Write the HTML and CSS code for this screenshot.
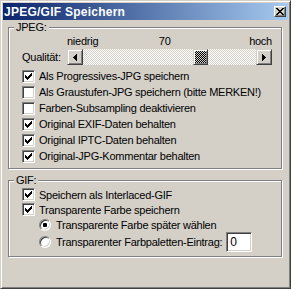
FILE: index.html
```html
<!DOCTYPE html>
<html lang="de">
<head>
    <meta charset="UTF-8">
    <title>JPEG/GIF Speichern</title>
    <link rel="stylesheet" href="styles.css">
</head>
<body>

    <div class="window">
        <div class="titlebar">
            <span class="title">JPEG/GIF Speichern</span>
            <span class="close">
                <svg width="8" height="7" viewBox="0 0 8 7"><path d="M0 0h2v1H0zM6 0h2v1H6zM1 1h2v1H1zM5 1h2v1H5zM2 2h4v1H2zM3 3h2v1H3zM2 4h4v1H2zM1 5h2v1H1zM5 5h2v1H5zM0 6h2v1H0zM6 6h2v1H6z"/></svg>
            </span>
        </div>

        <div class="content">
            <fieldset class="group">
                <legend>JPEG:</legend>

                <div class="quality">
                    <span></span>
                    <div class="scale">
                        <span>niedrig</span>
                        <span class="scale-value">70</span>
                        <span>hoch</span>
                    </div>
                    <span class="quality-label">Qualität:</span>
                    <div class="scrollbar">
                        <span class="sb-btn">
                            <svg width="4" height="7" viewBox="0 0 4 7"><path d="M0 3h1v1H0zM1 2h1v3H1zM2 1h1v5H2zM3 0h1v7H3z"/></svg>
                        </span>
                        <div class="sb-track">
                            <span class="sb-thumb" style="margin-left: 110px"></span>
                        </div>
                        <span class="sb-btn">
                            <svg width="4" height="7" viewBox="0 0 4 7"><path d="M3 3h1v1H3zM2 2h1v3H2zM1 1h1v5H1zM0 0h1v7H0z"/></svg>
                        </span>
                    </div>
                </div>

                <div class="row"><span class="check"><svg width="7" height="7" viewBox="0 0 7 7"><path d="M0 2h1v3H0zM1 3h1v3H1zM2 4h1v3H2zM3 3h1v3H3zM4 2h1v3H4zM5 1h1v3H5zM6 0h1v3H6z"/></svg></span>Als Progressives-JPG speichern</div>
                <div class="row"><span class="check"></span>Als Graustufen-JPG speichern (bitte MERKEN!)</div>
                <div class="row"><span class="check"></span>Farben-Subsampling deaktivieren</div>
                <div class="row"><span class="check"><svg width="7" height="7" viewBox="0 0 7 7"><path d="M0 2h1v3H0zM1 3h1v3H1zM2 4h1v3H2zM3 3h1v3H3zM4 2h1v3H4zM5 1h1v3H5zM6 0h1v3H6z"/></svg></span>Original EXIF-Daten behalten</div>
                <div class="row"><span class="check"><svg width="7" height="7" viewBox="0 0 7 7"><path d="M0 2h1v3H0zM1 3h1v3H1zM2 4h1v3H2zM3 3h1v3H3zM4 2h1v3H4zM5 1h1v3H5zM6 0h1v3H6z"/></svg></span>Original IPTC-Daten behalten</div>
                <div class="row"><span class="check"><svg width="7" height="7" viewBox="0 0 7 7"><path d="M0 2h1v3H0zM1 3h1v3H1zM2 4h1v3H2zM3 3h1v3H3zM4 2h1v3H4zM5 1h1v3H5zM6 0h1v3H6z"/></svg></span>Original-JPG-Kommentar behalten</div>
            </fieldset>

            <fieldset class="group gif">
                <legend>GIF:</legend>
                <div class="row"><span class="check"><svg width="7" height="7" viewBox="0 0 7 7"><path d="M0 2h1v3H0zM1 3h1v3H1zM2 4h1v3H2zM3 3h1v3H3zM4 2h1v3H4zM5 1h1v3H5zM6 0h1v3H6z"/></svg></span>Speichern als Interlaced-GIF</div>
                <div class="row"><span class="check"><svg width="7" height="7" viewBox="0 0 7 7"><path d="M0 2h1v3H0zM1 3h1v3H1zM2 4h1v3H2zM3 3h1v3H3zM4 2h1v3H4zM5 1h1v3H5zM6 0h1v3H6z"/></svg></span>Transparente Farbe speichern</div>
                <div class="row sub"><span class="radio on"></span>Transparente Farbe später wählen</div>
                <div class="row sub row-input"><span class="radio"></span>Transparenter Farbpaletten-Eintrag:<input class="num" type="text" value="0"></div>
            </fieldset>
        </div>
    </div>

</body>
</html>
```

FILE: styles.css
```css
body {
    margin: 0;
    background-color: #d4d0c8;
    font-family: "Liberation Sans", Arial, sans-serif;
    font-size: 11px;
    letter-spacing: -0.25px;
    color: #000;
}

.window {
    width: 291px;
    height: 289px;
    box-sizing: border-box;
    border: 1px solid;
    border-color: #d4d0c8 #404040 #404040 #d4d0c8;
    box-shadow: inset 1px 1px #fff, inset -1px -1px #808080;
    padding: 2px;
}

.titlebar {
    height: 17px;
    display: flex;
    align-items: center;
    justify-content: space-between;
    padding: 0 2px 0 1px;
    background: linear-gradient(to right, #0a246a, #a6caf0);
}

.title {
    color: #fff;
    font-weight: bold;
    font-size: 12px;
    letter-spacing: 0.25px;
}

.close {
    width: 12px;
    height: 11px;
    box-sizing: border-box;
    display: flex;
    align-items: center;
    justify-content: center;
    background-color: #d4d0c8;
    border: 1px solid;
    border-color: #fff #404040 #404040 #fff;
    box-shadow: inset -1px -1px #808080;
}

.content {
    padding: 0 6px 0 5px;
}

.group {
    margin: 0;
    min-width: 0;
    padding: 0 9px 4px 13px;
    border: 1px solid #808080;
    box-shadow: inset 1px 1px #fff, 1px 1px #fff;
}

.group legend {
    margin-left: -8px;
    padding: 0 2px;
    line-height: 14px;
    background-color: #d4d0c8;
}

.gif {
    margin-top: 4px;
    padding-bottom: 4px;
}

/* quality slider */
.quality {
    display: grid;
    grid-template-columns: 45px 1fr;
    row-gap: 1px;
    margin-bottom: 3px;
}

.scale {
    display: flex;
    justify-content: space-between;
    line-height: 14px;
}

.scale-value {
    margin-right: 18px;
}

.quality-label {
    align-self: center;
}

.scrollbar {
    display: flex;
    height: 16px;
}

.sb-btn,
.sb-thumb {
    width: 16px;
    height: 16px;
    box-sizing: border-box;
    display: flex;
    align-items: center;
    justify-content: center;
    background-color: #d4d0c8;
    border: 1px solid;
    border-color: #d4d0c8 #404040 #404040 #d4d0c8;
    box-shadow: inset 1px 1px #fff, inset -1px -1px #808080;
}

.sb-track {
    flex: 1;
    display: flex;
    background: repeating-conic-gradient(#fff 0 25%, #d4d0c8 0 50%) 0 0 / 2px 2px;
}

.sb-thumb {
    width: 15px;
    background: repeating-conic-gradient(#000 0 25%, #d4d0c8 0 50%) 0 0 / 2px 2px;
}

/* checkbox and radio rows */
.row {
    display: flex;
    align-items: center;
    gap: 4px;
    height: 16px;
    white-space: nowrap;
}

.gif .row {
    height: 15px;
}

.gif .row-input {
    height: 20px;
}

.row.sub {
    padding-left: 17px;
    gap: 5px;
}

.check {
    width: 13px;
    height: 13px;
    box-sizing: border-box;
    flex: none;
    display: flex;
    align-items: center;
    justify-content: center;
    background-color: #fff;
    border: 1px solid;
    border-color: #808080 #fff #fff #808080;
    box-shadow: inset 1px 1px #404040, inset -1px -1px #d4d0c8;
}

.radio {
    width: 12px;
    height: 12px;
    box-sizing: border-box;
    flex: none;
    border-radius: 50%;
    background-color: #fff;
    border: 1px solid;
    border-color: #808080 #fff #fff #808080;
    box-shadow: inset 1px 1px #404040, inset -1px -1px #d4d0c8;
}

.radio.on {
    background: radial-gradient(circle, #000 0 2px, #fff 2.5px);
}

.num {
    width: 26px;
    height: 20px;
    box-sizing: border-box;
    margin: 0 0 0 -1px;
    padding: 0 0 0 3px;
    font: inherit;
    font-size: 12px;
    background-color: #fff;
    border: 1px solid;
    border-color: #808080 #fff #fff #808080;
    box-shadow: inset 1px 1px #404040, inset -1px -1px #d4d0c8;
    outline: none;
}
```
